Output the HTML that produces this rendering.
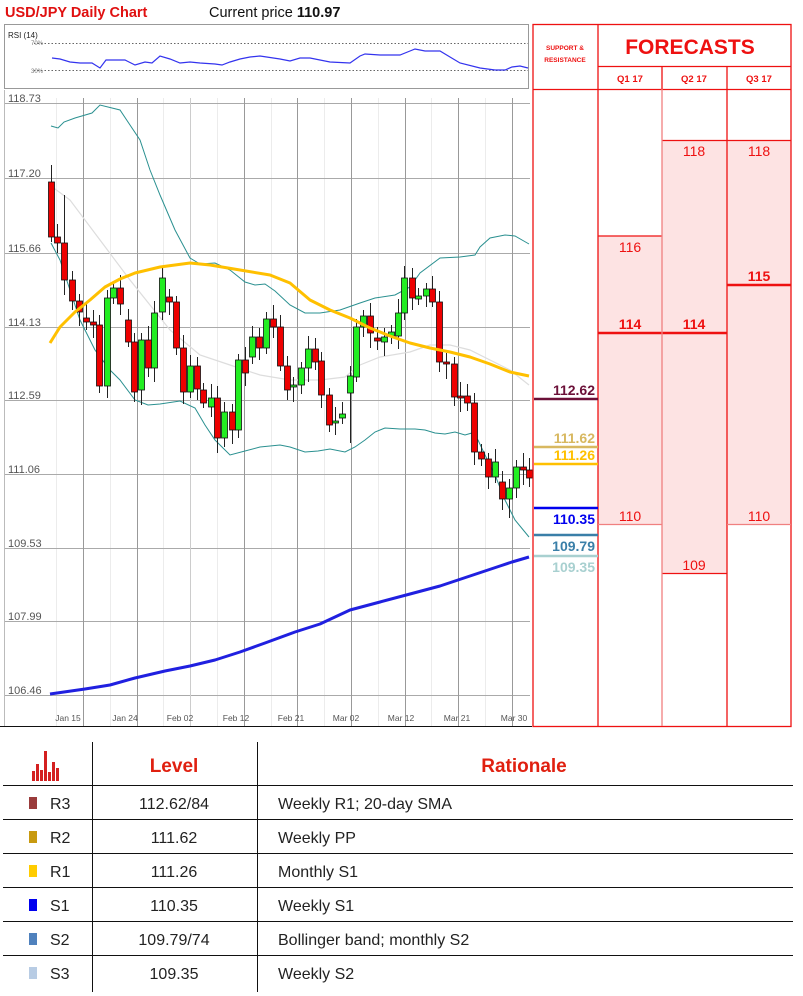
<!DOCTYPE html>
<html><head><meta charset="utf-8"><style>
html,body{margin:0;padding:0;background:#fff;width:803px;height:996px;overflow:hidden}
svg{display:block}
text{font-family:"Liberation Sans",sans-serif}
</style></head><body>
<svg id="s" width="803" height="996" viewBox="0 0 803 996" xmlns="http://www.w3.org/2000/svg">
<text x="5" y="17" font-size="14.5" font-weight="bold" fill="#e01010">USD/JPY Daily Chart</text>
<text x="209" y="17" font-size="14.5" fill="#111">Current price <tspan font-weight="bold">110.97</tspan></text>
<rect x="4.5" y="24.5" width="524" height="64" fill="#fff" stroke="#999"/>
<text x="8" y="38" font-size="8" fill="#222">RSI (14)</text>
<line x1="34" y1="43.5" x2="528" y2="43.5" stroke="#666" stroke-dasharray="1.5,2"/>
<line x1="34" y1="70.5" x2="528" y2="70.5" stroke="#666" stroke-dasharray="1.5,2"/>
<text x="31" y="45" font-size="6" fill="#777">70%</text>
<text x="31" y="73" font-size="6" fill="#777">30%</text>
<polyline fill="none" stroke="#3333ee" stroke-width="1.2" points="52,58 60,59 70,62 80,63 92,63 100,68 106,60 125,60 135,65 145,62 152,63 160,56 170,59 180,63 190,62 200,63 215,64 222,65 230,62 240,59 250,57 260,56 280,59 290,61 300,58 310,58 330,62 350,63 360,56 365,54 380,55 400,55 410,51 415,49 425,51 440,51 450,57 460,63 480,68 495,70 505,70 512,67 520,66 528,68"/>
<line x1="4.5" y1="90" x2="4.5" y2="726" stroke="#bbb"/>
<line x1="0" y1="726.5" x2="532" y2="726.5" stroke="#111"/>
<g id="grid"></g>
<g font-size="11" fill="#555">
<text x="8" y="102">118.73</text><text x="8" y="177">117.20</text><text x="8" y="252">115.66</text><text x="8" y="326">114.13</text><text x="8" y="399">112.59</text><text x="8" y="473">111.06</text><text x="8" y="547">109.53</text><text x="8" y="620">107.99</text><text x="8" y="694">106.46</text>
</g>
<g font-size="8.5" fill="#555" text-anchor="middle">
<text x="68" y="721">Jan 15</text><text x="125" y="721">Jan 24</text><text x="180" y="721">Feb 02</text><text x="236" y="721">Feb 12</text><text x="291" y="721">Feb 21</text><text x="346" y="721">Mar 02</text><text x="401" y="721">Mar 12</text><text x="457" y="721">Mar 21</text><text x="514" y="721">Mar 30</text>
</g>
<polyline fill="none" stroke="#ddd" stroke-width="1.2" points="51,186 70,200 100,240 130,280 150,305 170,330 200,355 230,365 260,375 290,380 320,380 345,377 360,365 380,357 410,352 430,345 450,345 470,350 490,360 510,370 529,385"/>
<polyline fill="none" stroke="#2a9090" stroke-width="1" points="51,126 58,128 64,122 75,118 92,113 100,105 120,110 140,140 150,170 160,195 175,230 190,258 200,264 215,263 230,270 245,282 255,285 265,284 275,291 290,305 305,313 320,313 340,310 360,303 375,298 395,295 410,287 420,273 440,258 460,257 475,255 480,247 490,238 505,235 515,236 529,244"/>
<polyline fill="none" stroke="#2a9090" stroke-width="1" points="51,243 60,260 70,290 80,320 95,350 110,370 120,380 135,400 148,405 160,404 180,401 195,408 205,425 215,440 230,455 245,451 260,447 280,445 290,447 305,452 318,451 330,449 345,452 355,447 365,440 375,432 385,428 400,429 415,429 425,430 435,433 445,434 455,432 465,435 472,433 478,440 485,455 495,475 505,500 515,520 529,537"/>
<g id="candles"></g>
<polyline fill="none" stroke="#ffc000" stroke-width="3" stroke-linejoin="round" points="50,343 60,327 75,312 90,300 105,287 120,279 135,273 160,267 190,263 210,265 240,270 270,275 290,283 310,300 330,310 350,318 370,328 390,336 410,343 430,348 450,352 470,357 490,364 510,372 529,376"/>
<polyline fill="none" stroke="#2020e0" stroke-width="3" stroke-linejoin="round" points="50,694 85,689 110,685 135,678 165,671 190,666 215,660 240,652 265,643 295,632 320,624 350,610 380,602 410,594 440,586 470,576 500,566 512,562 529,557"/>
<rect x="598" y="236" width="64" height="288" fill="#fde3e3"/>
<rect x="662" y="140" width="65" height="433" fill="#fde3e3"/>
<rect x="727" y="140" width="64" height="384" fill="#fde3e3"/>
<g stroke="#ee1111" stroke-width="1.3" fill="none">
<rect x="533" y="24.5" width="258" height="702"/>
<line x1="533" y1="89.5" x2="791" y2="89.5"/>
<line x1="598" y1="66.5" x2="791" y2="66.5"/>
<line x1="598" y1="24" x2="598" y2="726"/>
<line x1="727" y1="66" x2="727" y2="726"/>
<line x1="662" y1="66" x2="662" y2="89"/>
<line x1="598" y1="236" x2="662" y2="236"/>
<line x1="662" y1="140.5" x2="791" y2="140.5"/>
<line x1="598" y1="524.5" x2="662" y2="524.5" stroke="#f08080"/>
<line x1="727" y1="524.5" x2="791" y2="524.5" stroke="#f08080"/>
<line x1="662" y1="573.5" x2="727" y2="573.5"/>
<line x1="598" y1="333" x2="727" y2="333" stroke-width="2.5"/>
<line x1="727" y1="285" x2="791" y2="285" stroke-width="2.5"/>
</g>
<line x1="662" y1="89" x2="662" y2="726" stroke="#f08080" stroke-width="1.3"/>
<g fill="#ee1111" text-anchor="middle">
<text x="565" y="50" font-size="6.5" font-weight="bold">SUPPORT &amp;</text>
<text x="565" y="62" font-size="6.5" font-weight="bold">RESISTANCE</text>
<text x="690" y="54" font-size="21" font-weight="bold">FORECASTS</text>
<text x="630" y="82" font-size="9.5" font-weight="bold">Q1 17</text>
<text x="694" y="82" font-size="9.5" font-weight="bold">Q2 17</text>
<text x="759" y="82" font-size="9.5" font-weight="bold">Q3 17</text>
<g font-size="14"><text x="630" y="252">116</text><text x="694" y="156">118</text><text x="759" y="156">118</text>
<text x="630" y="521">110</text><text x="759" y="521">110</text><text x="694" y="570">109</text></g>
<g font-size="14" font-weight="bold"><text x="630" y="329">114</text><text x="694" y="329">114</text><text x="759" y="281">115</text></g>
</g>
<g stroke-width="2.5">
<line x1="534" y1="399" x2="598" y2="399" stroke="#6b1038"/>
<line x1="534" y1="447" x2="598" y2="447" stroke="#d8b860"/>
<line x1="534" y1="464" x2="598" y2="464" stroke="#ffc000"/>
<line x1="534" y1="508" x2="598" y2="508" stroke="#0000ee"/>
<line x1="534" y1="535" x2="598" y2="535" stroke="#3a7fa8"/>
<line x1="534" y1="556" x2="598" y2="556" stroke="#a8d0d0"/>
</g>
<g font-size="14" font-weight="bold" text-anchor="end">
<text x="595" y="395" fill="#6b1038">112.62</text>
<text x="595" y="443" fill="#d8b860">111.62</text>
<text x="595" y="460" fill="#ffc000">111.26</text>
<text x="595" y="524" fill="#0000ee">110.35</text>
<text x="595" y="551" fill="#3a7fa8">109.79</text>
<text x="595" y="572" fill="#a8d0d0">109.35</text>
</g>
<g stroke="#111" stroke-width="1">
<line x1="92.5" y1="742" x2="92.5" y2="992"/>
<line x1="257.5" y1="742" x2="257.5" y2="992"/>
<line x1="3" y1="785.5" x2="793" y2="785.5"/>
<line x1="3" y1="819.5" x2="793" y2="819.5"/>
<line x1="3" y1="853.5" x2="793" y2="853.5"/>
<line x1="3" y1="887.5" x2="793" y2="887.5"/>
<line x1="3" y1="921.5" x2="793" y2="921.5"/>
<line x1="3" y1="955.5" x2="793" y2="955.5"/>
</g>
<g fill="#d42020"><rect x="32" y="771" width="3" height="10"/><rect x="36" y="764" width="3" height="17"/><rect x="40" y="770" width="3" height="11"/><rect x="44" y="751" width="3" height="30"/><rect x="48" y="772" width="3" height="9"/><rect x="52" y="762" width="3" height="19"/><rect x="56" y="768" width="3" height="13"/></g>
<text x="174" y="772" font-size="19" font-weight="bold" fill="#e02010" text-anchor="middle">Level</text>
<text x="524" y="772" font-size="19" font-weight="bold" fill="#e02010" text-anchor="middle">Rationale</text>
<g font-size="16" fill="#222">
<rect x="29" y="797" width="8" height="12" fill="#9a3b3b"/><text x="50" y="809">R3</text><text x="174" y="809" text-anchor="middle">112.62/84</text><text x="278" y="809">Weekly R1; 20-day SMA</text>
<rect x="29" y="831" width="8" height="12" fill="#c89a10"/><text x="50" y="843">R2</text><text x="174" y="843" text-anchor="middle">111.62</text><text x="278" y="843">Weekly PP</text>
<rect x="29" y="865" width="8" height="12" fill="#ffcc00"/><text x="50" y="877">R1</text><text x="174" y="877" text-anchor="middle">111.26</text><text x="278" y="877">Monthly S1</text>
<rect x="29" y="899" width="8" height="12" fill="#0000ee"/><text x="50" y="911">S1</text><text x="174" y="911" text-anchor="middle">110.35</text><text x="278" y="911">Weekly S1</text>
<rect x="29" y="933" width="8" height="12" fill="#4f81bd"/><text x="50" y="945">S2</text><text x="174" y="945" text-anchor="middle">109.79/74</text><text x="278" y="945">Bollinger band; monthly S2</text>
<rect x="29" y="967" width="8" height="12" fill="#b8cce4"/><text x="50" y="979">S3</text><text x="174" y="979" text-anchor="middle">109.35</text><text x="278" y="979">Weekly S2</text>
</g>
</svg>
<script>
var NS="http://www.w3.org/2000/svg";
function el(p,t,a){var e=document.createElementNS(NS,t);for(var k in a)e.setAttribute(k,a[k]);p.appendChild(e);return e;}
var g=document.getElementById("grid");
for(var x=56.2;x<530;x+=53.6){el(g,"line",{x1:Math.round(x)+.5,y1:98,x2:Math.round(x)+.5,y2:726,stroke:"#ececec"});}
[103,178,253,327,400,474,548,621,695].forEach(function(y){el(g,"line",{x1:5,y1:y+.5,x2:530,y2:y+.5,stroke:"#aaa"});});
for(var i=0;i<10;i++){var x=83+i*53.6;if(x>530)break;el(g,"line",{x1:Math.round(x)+.5,y1:98,x2:Math.round(x)+.5,y2:726,stroke:i==2?"#ccc":"#999"});}
var C=[[51,182,237,'r',165],[57,237,243,'r'],[64,243,280,'r',195],[72,280,301,'r'],[79,301,312,'r'],[86,318,322,'r'],[93,322,325,'r'],[99,325,386,'r'],[107,298,386,'g'],[113,288,298,'g'],[120,288,304,'r'],[128,320,342,'r'],[134,342,392,'r'],[141,340,390,'g'],[148,340,368,'r'],[154,313,368,'g'],[162,278,312,'g'],[169,297,302,'r'],[176,302,348,'r'],[183,348,392,'r'],[190,366,392,'g'],[197,366,389,'r'],[203,390,403,'r'],[211,398,407,'g'],[217,398,438,'r'],[224,412,438,'g'],[232,412,430,'r'],[238,360,430,'g'],[245,360,373,'r'],[252,337,357,'g'],[259,337,348,'r'],[266,319,348,'g'],[273,319,327,'r'],[280,327,366,'r'],[287,366,390,'r'],[293,385,387,'g'],[301,368,385,'g'],[308,349,368,'g'],[315,349,362,'r'],[321,361,395,'r'],[329,395,425,'r'],[335,421,423,'g'],[342,414,418,'g'],[350,376,393,'g',null,443],[356,327,377,'g'],[363,316,327,'g'],[370,316,333,'r'],[377,338,341,'r'],[384,337,342,'g'],[391,332,336,'g'],[398,313,336,'g'],[404,278,313,'g'],[412,278,298,'r'],[418,296,299,'g'],[426,289,296,'g'],[432,289,302,'r'],[439,302,362,'r'],[446,362,364,'r'],[454,364,397,'r'],[460,396,398,'r'],[467,396,403,'r'],[474,403,452,'r'],[481,452,459,'r'],[488,459,477,'r'],[495,462,477,'g'],[502,482,499,'r'],[509,488,499,'g',null,518],[516,467,488,'g'],[523,467,470,'r'],[529,470,478,'r']];
var cg=document.getElementById("candles");
C.forEach(function(c,i){var wt=c[4]||c[1]-6-(i*7%9),wb=c[5]||c[2]+5+(i*5%11);
el(cg,"line",{x1:c[0]+.5,y1:wt,x2:c[0]+.5,y2:wb,stroke:"#222","stroke-width":1});
el(cg,"rect",{x:c[0]-2.5,y:c[1],width:6,height:Math.max(2,c[2]-c[1]),fill:c[3]=='r'?"#ee0000":"#22ee22",stroke:"#111","stroke-width":.8});});
</script>
</body></html>
